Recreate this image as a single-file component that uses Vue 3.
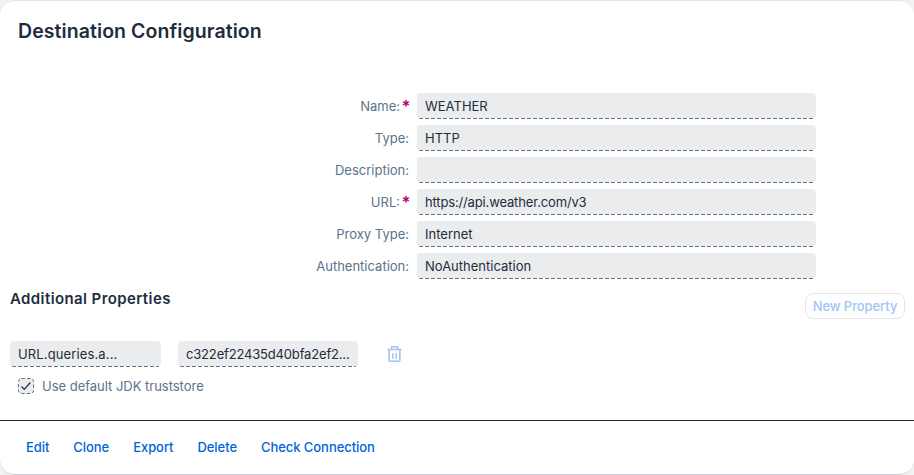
<script setup>
const fields = [
  { label: 'Name', value: 'WEATHER', required: true },
  { label: 'Type', value: 'HTTP' },
  { label: 'Description', value: '' },
  { label: 'URL', value: 'https://api.weather.com/v3', required: true, tone: 'url' },
  { label: 'Proxy Type', value: 'Internet' },
  { label: 'Authentication', value: 'NoAuthentication' },
]
const actions = ['Edit', 'Clone', 'Export', 'Delete', 'Check Connection']
</script>

<template>
  <main class="panel">
    <h1 class="title">Destination Configuration</h1>
    <section class="form">
      <div v-for="f in fields" :key="f.label" class="row">
        <label class="label">{{ f.label }}:<span v-if="f.required" class="star">*</span></label>
        <div class="field" :class="f.tone"><span>{{ f.value }}</span></div>
      </div>
    </section>
    <section class="extra">
      <header class="extra-head">
        <h2 class="subtitle">Additional Properties</h2>
        <button class="new-btn">New Property</button>
      </header>
      <div class="prop">
        <div class="field key"><span>URL.queries.a...</span></div>
        <div class="field val"><span>c322ef22435d40bfa2ef2...</span></div>
        <svg class="trash" width="16" height="16" viewBox="0 0 16 16" fill="none" stroke="#a0c5f3">
          <path d="M1.5 3.5h14M5.5 3V1.4q0-.7.7-.7h4.6q.7 0 .7.7V3" stroke-width="1.6" />
          <path d="M3.1 4v10q0 1.3 1.3 1.3h8.2q1.3 0 1.3-1.3V4" stroke-width="1.6" />
          <path d="M6.8 7v6M10.2 7v6" stroke-width="1.4" />
        </svg>
      </div>
      <div class="check">
        <svg class="box" width="16" height="16" viewBox="0 0 16 16">
          <rect x=".5" y=".5" width="15" height="15" rx="3" fill="#eaecee" stroke="#5b738b" stroke-dasharray="3.5 2" />
          <path d="M3.5 8.5l2.8 2.8 6-6.8" fill="none" stroke="#1d2d3e" stroke-width="1.2" />
        </svg>
        <span>Use default JDK truststore</span>
      </div>
    </section>
    <footer class="footer">
      <a v-for="a in actions" :key="a" class="action">{{ a }}</a>
    </footer>
  </main>
</template>

<style>
body {
  background: #f0f2f4;
}
</style>

<style scoped>
.panel {
  box-sizing: border-box;
  width: 914px;
  height: 475px;
  display: flex;
  flex-direction: column;
  background: #fff;
  border-top: 1px solid #e4e6e8;
  border-bottom: 1px solid #c9cdd1;
  border-radius: 15px;
  overflow: hidden;
  font-family: Inter, "Liberation Sans", sans-serif;
  font-size: 13px;
  color: #1d2d3e;
}
.title {
  margin: 18px 0 0 18px;
  font-size: 19.5px;
  line-height: 25px;
  font-weight: 600;
  letter-spacing: 0.08px;
}
.form {
  display: flex;
  flex-direction: column;
  gap: 6px;
  margin-top: 49px;
}
.row {
  display: flex;
  gap: 8px;
}
.label {
  display: flex;
  justify-content: flex-end;
  width: 409px;
  line-height: 26px;
  height: 26px;
  color: #5b738b;
}
.star {
  width: 7.5px;
  margin-left: 1.5px;
  color: #ba066c;
  font-size: 16px;
  line-height: 27px;
  font-weight: 700;
}
.field {
  box-sizing: border-box;
  width: 399px;
  height: 26px;
  padding: 0 8px;
  line-height: 26px;
  white-space: nowrap;
  border-radius: 4px;
  background:
    repeating-linear-gradient(90deg, #5b738b 0 4px, #fff 4px 6px) 2px 25px / calc(100% - 4px) 1px no-repeat,
    linear-gradient(#eaecee, #eaecee) 0 0 / 100% 25px no-repeat;
}
.url {
  letter-spacing: -0.15px;
}
.extra {
  display: flex;
  flex-direction: column;
  padding: 14px 9px 0 10px;
}
.extra-head {
  display: flex;
  justify-content: space-between;
  height: 26px;
}
.subtitle {
  margin: -4px 0 0;
  font-size: 15px;
  line-height: 20px;
  font-weight: 600;
  letter-spacing: 0.4px;
}
.new-btn {
  box-sizing: border-box;
  width: 100px;
  height: 26px;
  padding: 0;
  border: 1px solid #e4e6e8;
  border-radius: 8px;
  background: #fff;
  color: #a0c5f3;
  font: 500 13px/25px Inter, sans-serif;
  letter-spacing: -0.08px;
  white-space: nowrap;
}
.prop {
  display: flex;
  align-items: center;
  margin-top: 22px;
}
.key {
  width: 151px;
  letter-spacing: 0.13px;
}
.val {
  width: 180px;
  margin-left: 17px;
  letter-spacing: -0.17px;
}
.trash {
  margin-left: 28px;
}
.check {
  display: flex;
  align-items: center;
  gap: 8px;
  height: 16px;
  margin: 11px 0 0 8px;
  color: #5b738b;
  letter-spacing: -0.02px;
}
.footer {
  box-sizing: border-box;
  display: flex;
  align-items: center;
  gap: 24px;
  height: 54px;
  margin-top: auto;
  padding: 0 26px 1px;
  border-top: 1px solid #1d2d3e;
}
.action {
  color: #0064d9;
  font-weight: 500;
  letter-spacing: -0.06px;
}
</style>
